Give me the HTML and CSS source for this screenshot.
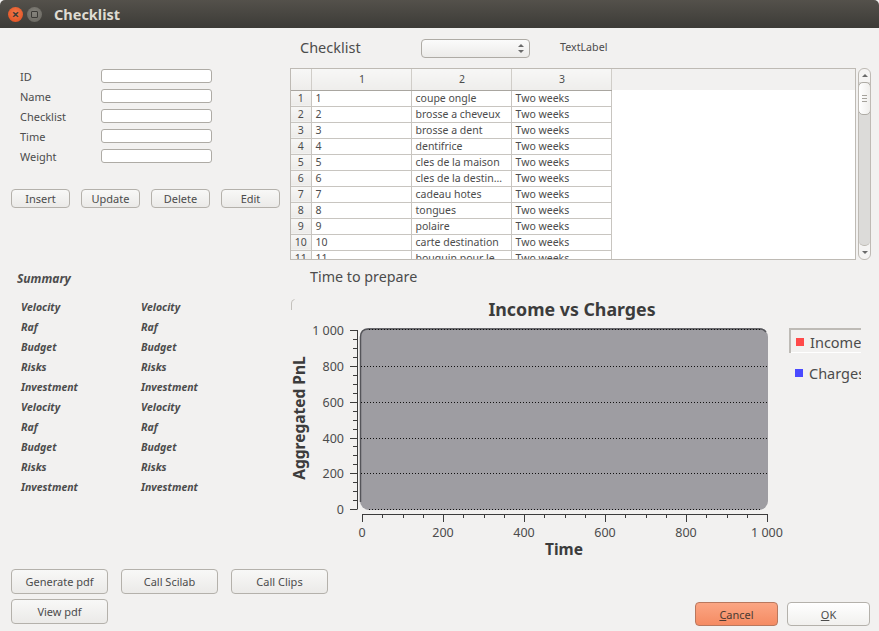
FILE: index.html
```html
<!DOCTYPE html>
<html lang="en">
<head>
<meta charset="utf-8">
<title>Checklist</title>
<link rel="stylesheet" href="styles.css">
</head>
<body>
<div class="window">
  <header class="titlebar">
    <span class="win-btn win-close">×</span>
    <span class="win-btn win-max"><i></i></span>
    <span class="win-title">Checklist</span>
  </header>
  <main class="main">
    <section class="left">
      <div class="form">
        <label>ID</label><input class="field" type="text">
        <label>Name</label><input class="field" type="text">
        <label>Checklist</label><input class="field" type="text">
        <label>Time</label><input class="field" type="text">
        <label>Weight</label><input class="field" type="text">
      </div>
      <div class="crud">
        <button class="btn">Insert</button>
        <button class="btn">Update</button>
        <button class="btn">Delete</button>
        <button class="btn">Edit</button>
      </div>
      <h2 class="summary-title">Summary</h2>
      <div class="summary">
        <span>Velocity</span><span>Velocity</span>
        <span>Raf</span><span>Raf</span>
        <span>Budget</span><span>Budget</span>
        <span>Risks</span><span>Risks</span>
        <span>Investment</span><span>Investment</span>
        <span>Velocity</span><span>Velocity</span>
        <span>Raf</span><span>Raf</span>
        <span>Budget</span><span>Budget</span>
        <span>Risks</span><span>Risks</span>
        <span>Investment</span><span>Investment</span>
      </div>
    </section>
    <section class="right">
      <div class="head-row">
        <span class="head-title">Checklist</span>
        <div class="combo"><span class="combo-arrows"><i class="up"></i><i class="down"></i></span></div>
        <span class="head-label">TextLabel</span>
      </div>
      <div class="table-row">
        <div class="table-box">
          <table class="grid">
            <colgroup><col class="c0"><col class="c1"><col class="c1"><col class="c1"><col></colgroup>
            <thead><tr><th></th><th>1</th><th>2</th><th>3</th><th class="blank"></th></tr></thead>
            <tbody>
              <tr><th>1</th><td>1</td><td>coupe ongle</td><td>Two weeks</td><td class="blank"></td></tr>
              <tr><th>2</th><td>2</td><td>brosse a cheveux</td><td>Two weeks</td><td class="blank"></td></tr>
              <tr><th>3</th><td>3</td><td>brosse a dent</td><td>Two weeks</td><td class="blank"></td></tr>
              <tr><th>4</th><td>4</td><td>dentifrice</td><td>Two weeks</td><td class="blank"></td></tr>
              <tr><th>5</th><td>5</td><td>cles de la maison</td><td>Two weeks</td><td class="blank"></td></tr>
              <tr><th>6</th><td>6</td><td>cles de la destin…</td><td>Two weeks</td><td class="blank"></td></tr>
              <tr><th>7</th><td>7</td><td>cadeau hotes</td><td>Two weeks</td><td class="blank"></td></tr>
              <tr><th>8</th><td>8</td><td>tongues</td><td>Two weeks</td><td class="blank"></td></tr>
              <tr><th>9</th><td>9</td><td>polaire</td><td>Two weeks</td><td class="blank"></td></tr>
              <tr><th>10</th><td>10</td><td>carte destination</td><td>Two weeks</td><td class="blank"></td></tr>
              <tr><th>11</th><td>11</td><td>bouquin pour le</td><td>Two weeks</td><td class="blank"></td></tr>
            </tbody>
          </table>
        </div>
        <div class="scrollbar">
          <div class="sb-btn"><i class="up"></i></div>
          <div class="trough"><div class="thumb"><i></i><i></i><i></i></div></div>
          <div class="sb-btn"><i class="down"></i></div>
        </div>
      </div>
      <div class="time-label">Time to prepare</div>
      <svg class="chart" width="571" height="272" viewBox="290 288 571 272">
        <path class="mark" d="M291.5 310V303q0-3 3-3.500"/>
        <text class="c-title" x="572" y="316" text-anchor="middle">Income vs Charges</text>
        <rect class="plot" x="360" y="328" width="408" height="182" rx="9"/>
        <path class="plot-edge" d="M360.500 502V337q0-8 8-8H760q4 0 6 3"/>
        <path class="grid-line" d="M369 329.500H762M361 366.500H767M361 402.500H767M361 438.500H767M361 473.500H767M369 509.500H762"/>
        <path class="axis" d="M357.500 330V509.500M350 330.500H357M350 366.500H357M350 402.500H357M350 438.500H357M350 473.500H357M350 509.500H357M353 339.500H357M353 348.500H357M353 357.500H357M353 375.500H357M353 384.500H357M353 393.500H357M353 411.500H357M353 420.500H357M353 429.500H357M353 446.500H357M353 455.500H357M353 464.500H357M353 482.500H357M353 491.500H357M353 500.500H357"/>
        <path class="axis" d="M362 514.500H768M362.500 514V522M443.500 514V522M524.500 514V522M605.500 514V522M686.500 514V522M767.500 514V522M382.500 514V518M403.500 514V518M423.500 514V518M463.500 514V518M484.500 514V518M504.500 514V518M544.500 514V518M565.500 514V518M585.500 514V518M625.500 514V518M646.500 514V518M666.500 514V518M706.500 514V518M727.500 514V518M747.500 514V518"/>
        <g class="c-tick" text-anchor="end">
          <text x="344" y="335">1 000</text>
          <text x="344" y="371">800</text>
          <text x="344" y="407">600</text>
          <text x="344" y="443">400</text>
          <text x="344" y="478">200</text>
          <text x="344" y="514">0</text>
        </g>
        <g class="c-tick" text-anchor="middle">
          <text x="362" y="537">0</text>
          <text x="443" y="537">200</text>
          <text x="524" y="537">400</text>
          <text x="605" y="537">600</text>
          <text x="686" y="537">800</text>
          <text x="767" y="537">1 000</text>
        </g>
        <text class="c-axis" x="564" y="555" text-anchor="middle">Time</text>
        <text class="c-axis" transform="translate(305 418) rotate(-90)" text-anchor="middle">Aggregated PnL</text>
        <path class="legend-dark" d="M790 353V329H861"/>
        <path class="legend-light" d="M791 352.500H861"/>
        <rect class="sw-red" x="796" y="338" width="8" height="8"/>
        <text class="c-legend" x="810" y="348">Income</text>
        <rect class="sw-blue" x="795" y="369" width="8" height="8"/>
        <text class="c-legend" x="809" y="379">Charges</text>
      </svg>
    </section>
  </main>
  <footer class="footer">
    <div class="tools">
      <button class="btn">Generate pdf</button>
      <button class="btn">Call Scilab</button>
      <button class="btn">Call Clips</button>
      <button class="btn">View pdf</button>
    </div>
    <div class="dialog">
      <button class="btn btn-cancel"><u>C</u>ancel</button>
      <button class="btn btn-ok"><u>O</u>K</button>
    </div>
  </footer>
</div>
</body>
</html>
```
FILE: styles.css
```css
* { box-sizing: border-box; }
html, body { margin: 0; padding: 0; background: #f2f1f0; }
body { font-family: "Noto Sans", "Open Sans", sans-serif; font-size: 11px; color: #4c4c4c; overflow: hidden; }
.window { width: 879px; height: 631px; display: flex; flex-direction: column; background: #f2f1f0; }

.titlebar { height: 28px; display: flex; align-items: center; padding-left: 8px; background: linear-gradient(#54514b, #3c3b37); border-radius: 5px 5px 0 0; }
.win-btn { width: 15px; height: 15px; border-radius: 50%; display: flex; align-items: center; justify-content: center; }
.win-close { background: radial-gradient(circle at 50% 40%, #f37a4a, #dd4a1c); color: #3c3b37; font-size: 13px; line-height: 15px; font-weight: 700; }
.win-max { margin-left: 4px; background: radial-gradient(circle at 50% 40%, #86847d, #64625b); }
.win-max i { width: 7px; height: 7px; border: 1px solid #3c3b37; border-radius: 1px; }
.win-title { margin-left: 12px; font-size: 14.500px; font-weight: 700; color: #dfdbd2; }

.main { height: 532px; display: flex; }
.left { width: 290px; padding-top: 41px; }
.form { display: grid; grid-template-columns: 81px 111px; row-gap: 6px; padding-left: 20px; align-items: center; }
.form label { font-size: 11px; line-height: 14px; padding-top: 1px; height: 14px; }
.field { width: 111px; height: 14px; padding: 0; background: #fff; border: 1px solid #aeaba5; border-radius: 3px; }

.btn { font: inherit; color: #4c4c4c; padding: 0; border: 1px solid #b4b1ab; border-radius: 4px; background: linear-gradient(#f8f8f7, #ebeae8); }
.crud { display: flex; gap: 11px; margin: 26px 0 0 11px; }
.crud .btn { width: 59px; height: 19px; }

.summary-title { margin: 63px 0 0 17px; height: 16px; line-height: 16px; font-size: 12px; font-weight: 700; font-style: italic; }
.summary { display: grid; grid-template-columns: 120px 120px; grid-auto-rows: 20px; margin: 10px 0 0 21px; font-size: 10.500px; font-weight: 700; font-style: italic; line-height: 20px; }

.right { width: 589px; }
.head-row { height: 40px; display: flex; align-items: center; padding-top: 1px; }
.head-title { width: 131px; padding-left: 10px; font-size: 14.500px; margin-bottom: 4px; }
.combo { width: 109px; height: 19px; border: 1px solid #aeaba5; border-radius: 4px; background: linear-gradient(#fbfbfb, #ecebe9); display: flex; align-items: center; justify-content: flex-end; padding-right: 5px; }
.combo-arrows { display: flex; flex-direction: column; gap: 3px; }
.up, .down { display: block; width: 0; height: 0; border-left: 3px solid transparent; border-right: 3px solid transparent; }
.up { border-bottom: 3px solid #6a6a6a; }
.down { border-top: 3px solid #6a6a6a; }
.head-label { margin-left: 30px; font-size: 10.700px; margin-bottom: 4px; }

.table-row { display: flex; height: 192px; }
.table-box { width: 566px; height: 192px; overflow: hidden; border: 1px solid #bebab4; background: #fff; }
.grid { width: 100%; table-layout: fixed; border-collapse: collapse; font-size: 10.500px; color: #4c4c4c; }
.c0 { width: 20px; }
.c1 { width: 100px; }
.grid thead th { height: 21px; padding: 0 0 0 2px; font-weight: 400; text-align: center; background: linear-gradient(#f7f7f6, #eeedeb); border-right: 1px solid #d0cdc8; border-bottom: 1px solid #a9a6a0; }
.grid tbody th { height: 16px; padding: 0; font-weight: 400; text-align: center; background: linear-gradient(#f7f7f6, #ecebe9); border-right: 1px solid #c8c5c0; border-bottom: 1px solid #c8c5c0; line-height: 15px; }
.grid td { height: 16px; padding: 0 3px 0 4px; border-right: 1px solid #c8c5c0; border-bottom: 1px solid #c8c5c0; white-space: nowrap; overflow: hidden; line-height: 15px; }
.grid thead .blank { background: #f2f1f0; border: 0; }
.grid td.blank { border: 0; background: #fff; }

.scrollbar { width: 13px; height: 192px; margin-left: 2px; display: flex; flex-direction: column; border: 1px solid #bebab4; border-radius: 6px; background: #f5f4f3; overflow: hidden; }
.sb-btn { height: 13px; flex: none; display: flex; align-items: center; justify-content: center; }
.trough { flex: 1; background: #dcdbd9; border-radius: 0 0 5px 5px; border-bottom: 1px solid #bebab4; }
.thumb { height: 33px; margin: 0 -1px; border: 1px solid #aeaba5; border-radius: 5px; background: linear-gradient(90deg, #fff, #efeeec); display: flex; flex-direction: column; gap: 2px; align-items: center; justify-content: center; }
.thumb i { width: 5px; height: 1px; background: #a5a29c; }

.time-label { height: 21px; margin-top: 7px; padding-left: 20px; font-size: 14.300px; line-height: 20px; }

.chart { display: block; }
.mark { fill: none; stroke: #c4c1bc; }
.c-title { font-size: 17.800px; font-weight: 700; fill: #3c3c3c; }
.plot { fill: #9e9da2; }
.plot-edge { fill: none; stroke: #55555a; stroke-width: 1.500; }
.grid-line { fill: none; stroke: #111; stroke-dasharray: 1 2; }
.axis { fill: none; stroke: #3c3c3c; }
.c-tick { font-size: 12.500px; fill: #4c4c4c; }
.c-axis { font-size: 15.500px; font-weight: 700; fill: #3c3c3c; }
.c-legend { font-size: 14.500px; fill: #4c4c4c; }
.legend-dark { fill: none; stroke: #bebbb6; stroke-width: 2; }
.legend-light { fill: none; stroke: #fff; }
.sw-red { fill: #ff4a4a; }
.sw-blue { fill: #4a4aff; }

.footer { height: 71px; display: flex; justify-content: space-between; }
.tools { display: grid; grid-template-columns: repeat(3, 97px); grid-template-rows: 25px 25px; column-gap: 13px; row-gap: 5px; padding: 9px 0 0 11px; align-content: start; }
.dialog { display: flex; gap: 9px; align-items: flex-end; padding: 0 9px 5px 0; }
.dialog .btn { height: 24px; width: 83px; }
.btn-cancel { background: linear-gradient(#fba684, #f58b63); border-color: #b9785e; color: #4c3a32; }
.btn-ok { background: linear-gradient(#ffffff, #f1f0ee); }
```
